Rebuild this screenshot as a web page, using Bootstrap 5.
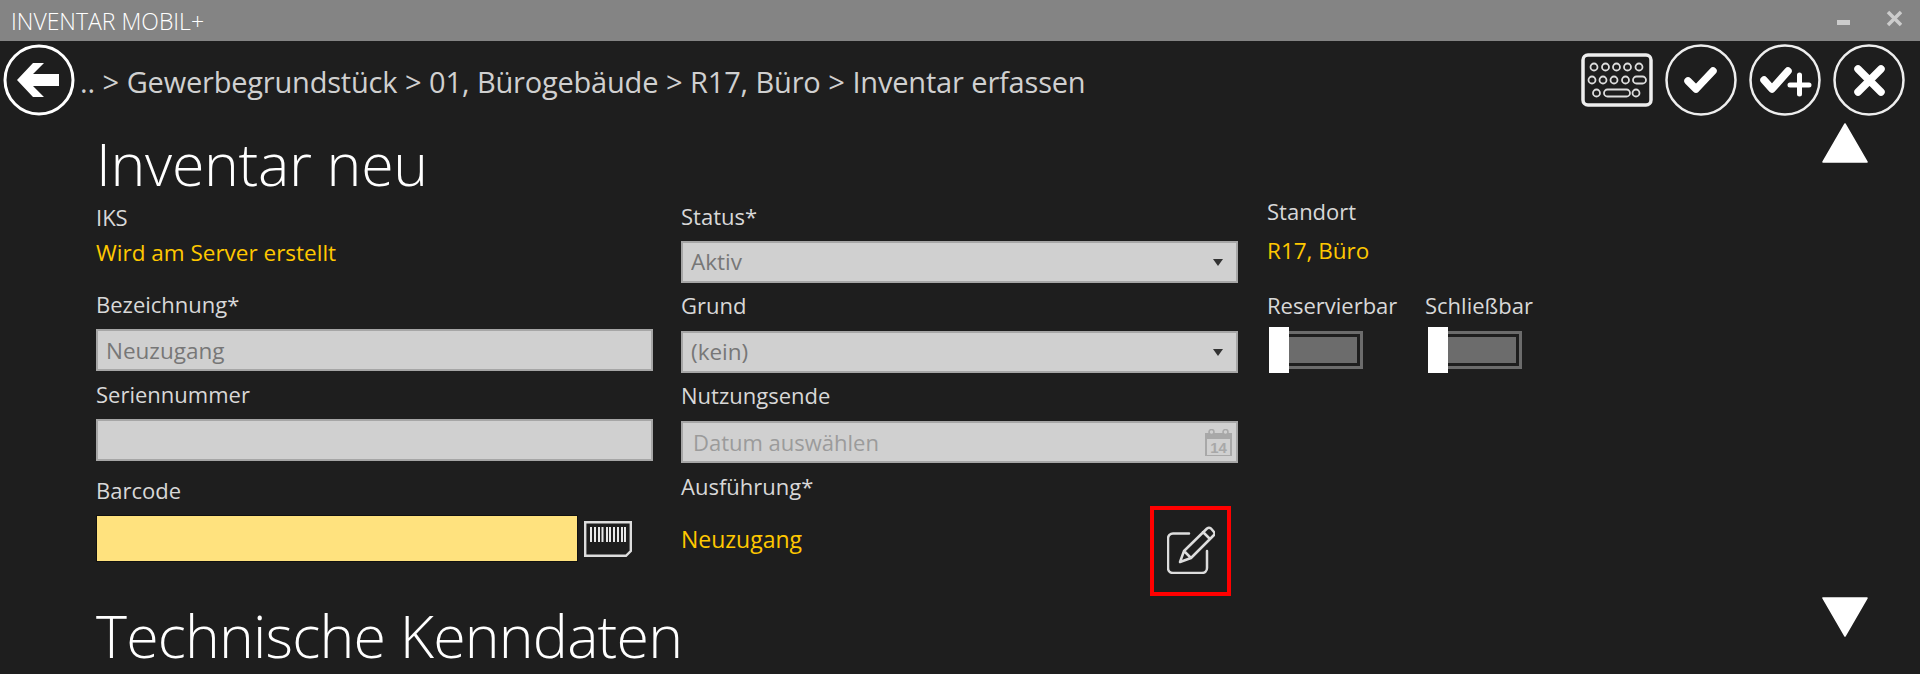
<!DOCTYPE html>
<html lang="de">
  <head>
    <meta charset="UTF-8" />
    <title>Inventar Mobil+</title>
    <link href="https://cdn.jsdelivr.net/npm/bootstrap@5.3.0/dist/css/bootstrap.min.css" rel="stylesheet" />
    <style>
      body {
        background: #1e1e1e;
        color: #d8d8d8;
        font-family: "Open Sans", "Noto Sans", sans-serif;
        font-size: 22px;
        line-height: 30px;
        height: 100vh;
        overflow: hidden;
      }
      .title-strip {
        height: 41px;
        background: #848484;
        color: #fff;
        padding: 0 18px 0 11px;
        font-size: 23px;
        font-weight: 300;
      }
      .tool-strip {
        height: 75px;
        padding: 3px 15px 0 3px;
      }
      .crumbs {
        font-size: 29px;
        padding-left: 5px;
        padding-top: 23px;
        letter-spacing: -0.2px;
        word-spacing: 0.4px;
        color: #d0d0d0;
      }
      .tool-icons { gap: 12px; }
      .keyboard-icon { margin-top: 9px; }
      .page-head {
        font-size: 59px;
        line-height: 60px;
        font-weight: 300;
        color: #fff;
        letter-spacing: -0.3px;
        margin: 0;
      }
      .section-head {
        margin-top: 9px;
        letter-spacing: -0.8px;
      }
      .main-pane {
        padding: 17px 0 0 96px;
        height: 558px;
      }
      .form-cols {
        margin-top: 5px;
      }
      .col-one { width: 557px; margin-right: 28px; padding-top: 6px; }
      .col-two { width: 557px; margin-right: 29px; padding-top: 5px; }
      .field-label { height: 30px; line-height: 26px; margin-bottom: 8px; }
      .iks-label { margin-bottom: 4px; }
      .after-value { margin-top: 23px; }
      .after-input { margin-top: 16px; }
      .wide-gap { margin-bottom: 9px; }
      .exec-label { margin-top: 10px; margin-bottom: 3px; }
      .value-text { color: #ffc800; height: 30px; font-size: 22.5px; }
      .form-control.flat-input, .form-select.flat-input {
        height: 42px;
        border-radius: 0;
        border: 2px solid #a6a6a6;
        background-color: #d0d0d0;
        color: #777;
        font-size: 22.5px;
        padding: 0 8px;
        box-shadow: none;
      }
      .form-select.flat-input {
        background-image: url("data:image/svg+xml,%3Csvg xmlns='http://www.w3.org/2000/svg' width='10' height='7'%3E%3Cpath d='M0 0h10L5 7z' fill='%23333'/%3E%3C/svg%3E");
        background-size: 10px 7px;
        background-position: right 13px center;
        background-repeat: no-repeat;
      }
      .flat-input::placeholder { color: #777; opacity: 1; }
      .form-control.date-input { padding-left: 10px; font-size: 22px; }
      .date-input::placeholder { color: #9b9b9b; }
      .field-gap { margin-bottom: 9px; }
      .col-one .field-gap { margin-bottom: 10px; }
      .date-wrap svg {
        position: absolute;
        right: 6px;
        top: 8px;
      }
      .form-control.barcode-input {
        width: 482px;
        height: 47px;
        border-radius: 0;
        border: 1px solid #111;
        background: #ffe27e;
      }
      .barcode-icon { margin: 6px 0 0 6px; }
      .edit-box {
        width: 81px;
        height: 90px;
        border: 4px solid #f00;
        border-radius: 0;
        padding: 0 0 2px;
        margin-right: 7px;
      }
      .edit-value { margin-top: 18px; font-size: 23px; }
      .toggle-labels { margin-top: 26px; line-height: 26px; height: 30px; }
      .toggle-row { margin-top: 5px; }
      .toggle-item { width: 158px; }
      .toggle-first { margin-left: 2px; }
      .toggle-second { margin-left: 3px; }
      .switch-thumb { width: 20px; height: 46px; background: #fff; }
      .switch-track {
        width: 74px;
        height: 38px;
        border: 3px solid #6c6c6c;
        border-left: 0;
        padding: 3px 3px 3px 0;
        background: #6c6c6c;
        background-clip: content-box;
      }
      .scroll-col {
        width: 46px;
        margin-right: 52px;
        padding: 7px 0 37px;
      }
    </style>
  </head>
  <body>
    <div class="title-strip d-flex justify-content-between align-items-center">
      <span>INVENTAR MOBIL+</span>
      <svg width="65" height="41" viewBox="0 0 65 41">
        <rect x="0" y="20" width="13" height="5" fill="#ccc" />
        <path d="M51 12 L64 25 M64 12 L51 25" stroke="#ccc" stroke-width="3.5" />
      </svg>
    </div>

    <div class="tool-strip d-flex align-items-start">
      <svg width="72" height="72" viewBox="0 0 72 72">
        <circle cx="36" cy="36" r="34" fill="none" stroke="#fff" stroke-width="3" />
        <path d="M14 36 L30 19 H41 L30 30 H56 V42 H30 L41 53 H30 Z" fill="#fff" />
      </svg>
      <div class="crumbs flex-grow-1">.. &gt; Gewerbegrundstück &gt; 01, Bürogebäude &gt; R17, Büro &gt; Inventar erfassen</div>
      <div class="tool-icons d-flex align-items-start">
        <svg class="keyboard-icon" width="72" height="54" viewBox="0 0 72 54" fill="none" stroke="#ddd" stroke-width="1.8">
          <rect x="2" y="2" width="68" height="50" rx="5" stroke="#eee" stroke-width="3.5" />
          <circle cx="13" cy="14" r="3.5" /><circle cx="24.5" cy="14" r="3.5" /><circle cx="35.5" cy="14" r="3.5" /><circle cx="46.5" cy="14" r="3.5" /><circle cx="58" cy="14" r="3.5" />
          <circle cx="11" cy="27" r="3.5" /><circle cx="22" cy="27" r="3.5" /><circle cx="33" cy="27" r="3.5" /><circle cx="44.5" cy="27" r="3.5" /><rect x="52" y="23.5" width="13" height="7" rx="3.5" />
          <circle cx="15.5" cy="40" r="3.5" /><rect x="23" y="36.5" width="26" height="7" rx="3.5" /><circle cx="55" cy="40" r="3.5" />
        </svg>
        <svg width="72" height="72" viewBox="0 0 72 72" fill="none" stroke="#eee" stroke-linecap="round" stroke-linejoin="round">
          <circle cx="36" cy="36" r="34.5" stroke-width="2.5" />
          <path d="M23 37 L31 45 L48 27" stroke="#fff" stroke-width="7.5" />
        </svg>
        <svg width="72" height="72" viewBox="0 0 72 72" fill="none" stroke="#eee" stroke-linecap="round" stroke-linejoin="round">
          <circle cx="36" cy="36" r="34.5" stroke-width="2.5" />
          <path d="M15 36 L23 45 L39 27" stroke="#fff" stroke-width="7.5" />
          <path d="M41 41 H60 M50.5 31 V50" stroke="#fff" stroke-width="5" />
        </svg>
        <svg width="72" height="72" viewBox="0 0 72 72" fill="none" stroke="#eee" stroke-linecap="round">
          <circle cx="36" cy="36" r="34.5" stroke-width="2.5" />
          <path d="M25 25 L48 48 M48 25 L25 48" stroke="#fff" stroke-width="7.5" />
        </svg>
      </div>
    </div>

    <div class="d-flex">
      <div class="main-pane flex-grow-1">
        <h1 class="page-head">Inventar neu</h1>
        <div class="form-cols d-flex">
          <div class="col-one">
            <div class="field-label iks-label">IKS</div>
            <div class="value-text">Wird am Server erstellt</div>
            <div class="field-label after-value">Bezeichnung*</div>
            <input class="form-control flat-input field-gap" type="text" placeholder="Neuzugang" />
            <div class="field-label">Seriennummer</div>
            <input class="form-control flat-input" type="text" />
            <div class="field-label after-input">Barcode</div>
            <div class="d-flex align-items-start">
              <input class="form-control barcode-input" type="text" />
              <svg class="barcode-icon" width="48" height="36" viewBox="0 0 48 36">
                <path d="M1.2 1.2 H46.800 V30 L42 34.800 H1.2 Z" fill="none" stroke="#ddd" stroke-width="2.4" />
                <path d="M7 6v15M11 6v15M15 6v15M18.500 6v15M23 6v15M26 6v15M30 6v15M34 6v15M38 6v15M41 6v15" stroke="#e8e8e8" stroke-width="2" />
              </svg>
            </div>
          </div>

          <div class="col-two">
            <div class="field-label">Status*</div>
            <select class="form-select flat-input field-gap"><option>Aktiv</option></select>
            <div class="field-label wide-gap">Grund</div>
            <select class="form-select flat-input field-gap"><option>(kein)</option></select>
            <div class="field-label wide-gap">Nutzungsende</div>
            <div class="position-relative date-wrap">
              <input class="form-control flat-input date-input" type="text" placeholder="Datum auswählen" />
              <svg width="27" height="27" viewBox="0 0 27 27">
                <path d="M1 5 H26 V27 H1 Z" fill="none" stroke="#a8a8a8" stroke-width="2" />
                <rect x="1" y="4" width="25" height="6" fill="#a8a8a8" />
                <circle cx="6.500" cy="3" r="2.500" fill="#d0d0d0" stroke="#a8a8a8" stroke-width="1.500" />
                <circle cx="20.500" cy="3" r="2.500" fill="#d0d0d0" stroke="#a8a8a8" stroke-width="1.500" />
                <text x="13.500" y="24" text-anchor="middle" font-size="15" font-weight="600" font-family="Liberation Sans, sans-serif" fill="#a8a8a8">14</text>
              </svg>
            </div>
            <div class="field-label exec-label">Ausführung*</div>
            <div class="d-flex justify-content-between align-items-start">
              <div class="value-text edit-value">Neuzugang</div>
              <button type="button" class="btn edit-box d-flex align-items-center justify-content-center">
                <svg width="48" height="48" viewBox="0 0 48 48" fill="none" stroke="#ddd" stroke-width="2.5" stroke-linejoin="round" stroke-linecap="round">
                  <path d="M22 7.500 H6 a5 5 0 0 0 -5 5 V42 a5 5 0 0 0 5 5 H35 a5 5 0 0 0 5 -5 V25" />
                  <path d="M13 36 L17 25 L40 2.500 Q42 1 44 2.500 L47 6 Q48 8 47 9 L24 32 Z M17 25 L24 32 M36 6 L43 13" />
                </svg>
              </button>
            </div>
          </div>

          <div>
            <div class="field-label">Standort</div>
            <div class="value-text">R17, Büro</div>
            <div class="d-flex toggle-labels">
              <div class="toggle-item">Reservierbar</div>
              <div>Schließbar</div>
            </div>
            <div class="d-flex toggle-row">
              <div class="toggle-item">
                <div class="d-flex align-items-center toggle-first"><div class="switch-thumb"></div><div class="switch-track"></div></div>
              </div>
              <div class="d-flex align-items-center toggle-second"><div class="switch-thumb"></div><div class="switch-track"></div></div>
            </div>
          </div>
        </div>
        <h1 class="page-head section-head">Technische Kenndaten</h1>
      </div>

      <div class="scroll-col d-flex flex-column justify-content-between">
        <svg width="46" height="40" viewBox="0 0 46 40"><path d="M23 1 L45 39 H1 Z" fill="#fff" stroke="#fff" stroke-width="1.500" stroke-linejoin="round" /></svg>
        <svg width="46" height="40" viewBox="0 0 46 40"><path d="M1 1 H45 L23 39 Z" fill="#fff" stroke="#fff" stroke-width="1.500" stroke-linejoin="round" /></svg>
      </div>
    </div>
  </body>
</html>
